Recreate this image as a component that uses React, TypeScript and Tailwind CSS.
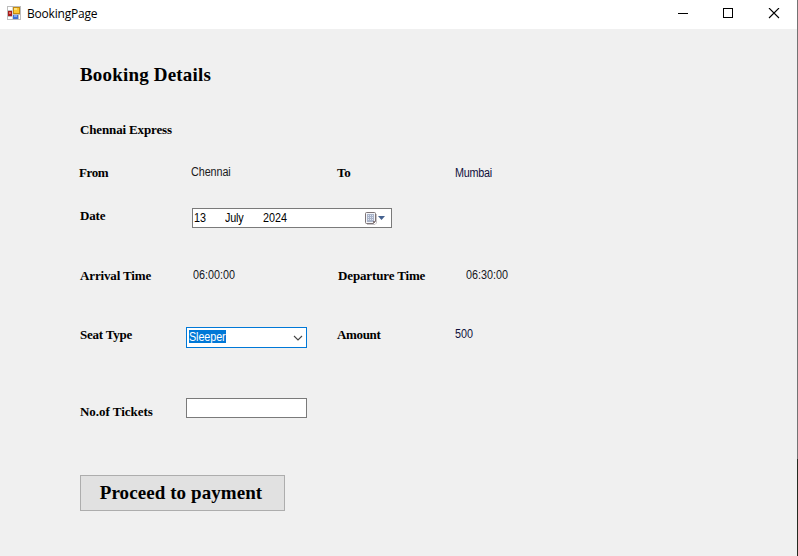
import React from 'react';

const serif = "font-['Liberation_Serif',serif] font-bold text-black whitespace-nowrap";
const sans = "font-['Liberation_Sans',sans-serif] text-[12px] whitespace-nowrap";

function Label({
  className = '',
  tracking = 'tracking-[-0.14px]',
  children,
}: {
  className?: string;
  tracking?: string;
  children: React.ReactNode;
}) {
  return <div className={`${serif} text-[13px] leading-[16px] shrink-0 ${tracking} ${className}`}>{children}</div>;
}

function Value({ className = '', children }: { className?: string; children: React.ReactNode }) {
  return (
    <div className={`${sans} shrink-0 leading-[16px] ${className}`}>
      <span className="inline-block origin-left scale-x-90">{children}</span>
    </div>
  );
}

function FormIcon() {
  return (
    <svg width="14" height="14" viewBox="0 0 14 14" shapeRendering="crispEdges">
      <rect width="14" height="14" fill="#bdbdbd" />
      <path d="M1 1h4v3H1zM1 11h4v2H1zM12 9h1v4h-1z" fill="#fff" />
      <rect x="5" y="1" width="1" height="12" fill="#d8d8d8" />
      <rect x="1" y="5" width="4" height="5" fill="#a51c1c" />
      <rect x="2" y="6" width="2" height="2" fill="#e8695c" />
      <rect x="6" y="1" width="7" height="7" fill="#c48a10" />
      <rect x="7" y="2" width="5" height="5" fill="#fbc834" />
      <rect x="7" y="2" width="3" height="2" fill="#ffe27c" />
      <rect x="6" y="9" width="5" height="4" fill="#3e6fd0" />
      <rect x="7" y="9" width="3" height="2" fill="#7fa9f2" />
    </svg>
  );
}

function CalendarIcon() {
  return (
    <svg width="22" height="14" viewBox="0 0 22 14">
      <path d="M2 12.500h8l1.500-1.500V2" fill="none" stroke="#c9c5c7" />
      <path d="M1.500.5h8q1 0 1 1v8l-2 2H1.500q-1 0-1-1v-9q0-1 1-1z" fill="#f4f5f8" stroke="#7d7477" />
      <rect x="2" y="2" width="7" height="8" fill="#a9b3c9" />
      <path d="M3 3h1v1H3zM5 3h1v1H5zM7 3h1v1H7zM3 5h1v1H3zM5 5h1v1H5zM7 5h1v1H7zM3 7h1v1H3zM5 7h1v1H5zM7 7h1v1H7z" fill="#dfe6f2" />
      <path d="M8 11.500V9h2.500z" fill="#7d6f70" />
      <path d="M13 4h7l-3.500 4z" fill="#44618f" />
    </svg>
  );
}

export default function App() {
  return (
    <div className="flex h-[556px] w-[798px] overflow-hidden bg-[#f0f0f0]">
      <div className="flex w-[797px] shrink-0 flex-col">
        <header className="flex h-[29px] shrink-0 items-start bg-white">
          <div className="ml-[7px] mt-[6px] shrink-0">
            <FormIcon />
          </div>
          <div className="ml-[6px] mt-[6px] flex-1 whitespace-nowrap font-['Open_Sans',sans-serif] text-[12px] leading-[16px] tracking-[-0.2px] text-black">
            BookingPage
          </div>
          <svg className="mr-[17px] mt-[8px]" width="102" height="11" viewBox="0 0 102 11" fill="none" stroke="#000">
            <path d="M0 5.500h10M45.500.5h9v9h-9z" shapeRendering="crispEdges" />
            <path d="M91 0l10 10M101 0l-10 10" strokeWidth="1.100" />
          </svg>
        </header>

        <main className="flex flex-col items-start">
          <h1 className={`${serif} ml-[80px] mt-[34px] h-[24px] text-[19px] leading-[24px] tracking-[0.18px]`}>Booking Details</h1>
          <Label className="ml-[80px] mt-[35px]">Chennai Express</Label>

          <div className="mt-[26px] flex h-[18px] items-start">
            <Label className="ml-[79px] mt-px w-[112px]" tracking="tracking-[-0.4px]">From</Label>
            <Value className="w-[146px] tracking-[-0.1px] text-[#1a1a1a]">Chennai</Value>
            <Label className="mt-px w-[118px]">To</Label>
            <Value className="mt-px tracking-[-0.3px] text-[#10103c]">Mumbai</Value>
          </div>

          <div className="mt-[26px] flex h-[20px] items-start">
            <Label className="ml-[80px] w-[112px]">Date</Label>
            <div className="flex h-[20px] w-[200px] items-start border border-[#7a7a7a] bg-white">
              <Value className="ml-px mt-px w-[31px]">13</Value>
              <Value className="mt-px w-[38px] tracking-[-0.2px]">July</Value>
              <Value className="mt-px w-[102px]">2024</Value>
              <div className="mt-[3px]">
                <CalendarIcon />
              </div>
            </div>
          </div>

          <div className="mt-[39px] flex h-[18px] items-start">
            <Label className="ml-[80px] mt-px w-[113px]">Arrival Time</Label>
            <Value className="w-[145px] text-[#161622]">06:00:00</Value>
            <Label className="mt-px w-[128px]">Departure Time</Label>
            <Value className="text-[#161622]">06:30:00</Value>
          </div>

          <div className="mt-[41px] flex h-[22px] items-start">
            <Label className="ml-[80px] mt-px w-[106px]" tracking="tracking-[-0.22px]">Seat Type</Label>
            <div className="mr-[30px] mt-px flex h-[21px] w-[121px] items-start border border-[#0078d7] bg-white">
              <div className={`${sans} ml-[2px] mt-[2px] h-[13px] w-[37px] bg-[#0078d7] leading-[15px] tracking-[-0.1px] text-white`}>
                <span className="inline-block origin-left scale-x-90">Sleeper</span>
              </div>
              <svg className="ml-[67px] mt-[7px]" width="10" height="7" viewBox="0 0 10 7" fill="none" stroke="#444">
                <path d="M1 1l4 4 4-4" strokeWidth="1.100" />
              </svg>
            </div>
            <Label className="mt-px w-[118px]" tracking="tracking-[-0.35px]">Amount</Label>
            <Value className="text-[#10103c]">500</Value>
          </div>

          <div className="mt-[50px] flex h-[22px] items-start">
            <Label className="ml-[80px] mt-[6px] w-[106px]" tracking="tracking-[-0.03px]">No.of Tickets</Label>
            <div className="h-[20px] w-[121px] border border-[#7a7a7a] bg-white" />
          </div>

          <button className={`${serif} ml-[80px] mt-[55px] h-[36px] w-[205px] border border-[#adadad] bg-[#e1e1e1] pr-[3px] text-[19px] leading-[34px] tracking-[0.08px]`}>
            Proceed to payment
          </button>
        </main>
      </div>
      <div className="flex w-px flex-col">
        <div className="h-[459px] bg-[#737373]" />
        <div className="flex-1 bg-[#252a20]" />
      </div>
    </div>
  );
}
